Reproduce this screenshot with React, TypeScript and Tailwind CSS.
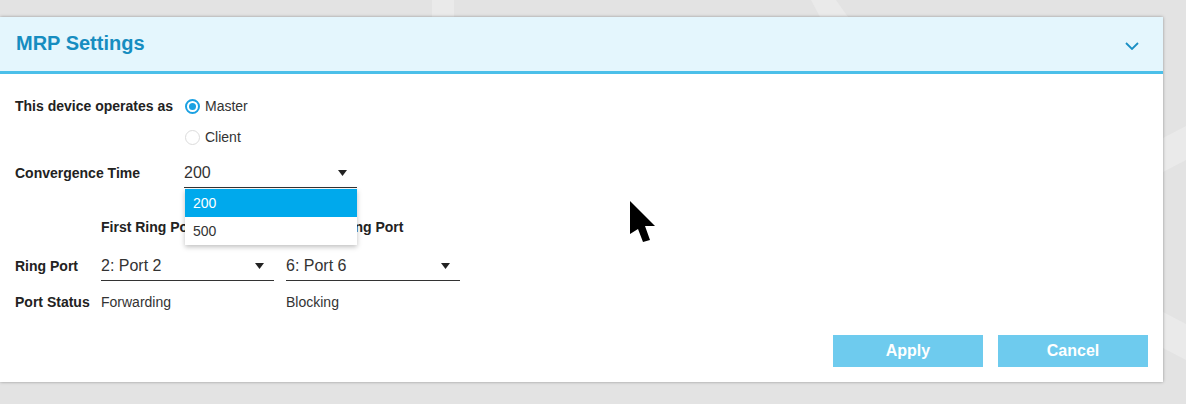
import { useState } from 'react'

const font = { fontFamily: '"Liberation Sans", Arial, sans-serif' }

function Arrow() {
  return (
    <svg width="9" height="6" viewBox="0 0 9 6" className="shrink-0">
      <path d="M0 0 H9 L4.5 6 Z" fill="#222" />
    </svg>
  )
}

function Select({ value, width }: { value: string; width: string }) {
  return (
    <div className={`${width} h-[29px] border-b border-[#333] flex items-center justify-between pr-[10px] text-[16px] text-[#333]`}>
      <span>{value}</span>
      <Arrow />
    </div>
  )
}

function Radio({ checked, label }: { checked: boolean; label: string }) {
  return (
    <div className="flex items-center gap-[5px] h-[30px]">
      {checked ? (
        <span className="w-[15px] h-[15px] rounded-full border-2 border-[#1ba1e2] flex items-center justify-center">
          <span className="w-[7px] h-[7px] rounded-full bg-[#1ba1e2]" />
        </span>
      ) : (
        <span className="w-[15px] h-[15px] rounded-full border border-[#dcdcdc]" />
      )}
      <span className="text-[14px] text-[#333]">{label}</span>
    </div>
  )
}

export default function App() {
  const [mode] = useState('master')

  return (
    <div className="relative w-[1186px] h-[404px] bg-[#e3e3e3] overflow-hidden pt-[17px]" style={font}>
      {/* background stripes */}
      <svg className="absolute inset-0" width="1186" height="404">
        <polygon points="432,0 454,0 454,17 432,17" fill="#eaeaea" />
        <polygon points="811,0 836,0 848,17 820,17" fill="#eaeaea" />
        <polygon points="1163,138 1186,126 1186,160 1163,172" fill="#eaeaea" />
        <polygon points="1163,312 1186,324 1186,360 1163,348" fill="#eaeaea" />
      </svg>

      <div className="relative w-[1163px] bg-white shadow-[0_0_3px_rgba(0,0,0,0.35)]">
        {/* Header */}
        <div className="h-[57px] bg-[#e4f6fd] border-b-[3px] border-[#4bbfe9] flex items-center justify-between pl-[16px] pr-[24px]">
          <h1 className="text-[20px] font-bold text-[#168dc0] -mt-[2px]">MRP Settings</h1>
          <svg width="14" height="8" viewBox="0 0 14 8" className="mt-[3px]">
            <path d="M1 1 L7 7 L13 1" fill="none" stroke="#1a8fc4" strokeWidth="1.8" />
          </svg>
        </div>

        {/* Body */}
        <div className="pl-[15px] pr-[15px] pt-[17px] pb-[15px]">
          <div className="flex">
            <div className="w-[170px] h-[30px] flex items-center text-[14px] font-bold text-[#222]">
              This device operates as
            </div>
            <div className="flex flex-col gap-[1px]">
              <Radio checked={mode === 'master'} label="Master" />
              <Radio checked={mode === 'client'} label="Client" />
            </div>
          </div>

          <div className="flex mt-[7px]">
            <div className="w-[169px] h-[29px] flex items-center text-[14px] font-bold text-[#222]">
              Convergence Time
            </div>
            <div className="relative">
              <Select value="200" width="w-[173px]" />
              <div className="absolute left-[1px] top-[30px] w-[172px] bg-white shadow-[0_2px_5px_rgba(0,0,0,0.25)] z-10 text-[14px]">
                <div className="h-[28px] flex items-center px-[8px] bg-[#00a9ec] text-white">200</div>
                <div className="h-[28px] flex items-center px-[8px] text-[#333]">500</div>
              </div>
            </div>
          </div>

          <div className="flex mt-[29px] h-[20px] items-center text-[14px] font-bold text-[#222]">
            <div className="w-[86px]" />
            <div className="w-[185px]">First Ring Port</div>
            <div>Second Ring Port</div>
          </div>

          <div className="flex mt-[15px]">
            <div className="w-[86px] h-[29px] flex items-center text-[14px] font-bold text-[#222]">Ring Port</div>
            <Select value="2: Port 2" width="w-[173px]" />
            <div className="w-[12px]" />
            <Select value="6: Port 6" width="w-[174px]" />
          </div>

          <div className="flex mt-[11px] h-[20px] items-center text-[14px] text-[#333]">
            <div className="w-[86px] font-bold text-[#222]">Port Status</div>
            <div className="w-[185px]">Forwarding</div>
            <div>Blocking</div>
          </div>

          <div className="flex justify-end gap-[15px] mt-[23px]">
            <button className="w-[150px] h-[32px] bg-[#6ecbee] text-white text-[16px] font-bold">Apply</button>
            <button className="w-[150px] h-[32px] bg-[#6ecbee] text-white text-[16px] font-bold">Cancel</button>
          </div>
        </div>
      </div>

      {/* mouse cursor */}
      <svg className="absolute left-[630px] top-[201px]" width="26" height="42" viewBox="0 0 26 42">
        <polygon points="0,0 25,25 15,25 20,39 13,41 8,28 0,33" fill="#000" />
      </svg>
    </div>
  )
}
